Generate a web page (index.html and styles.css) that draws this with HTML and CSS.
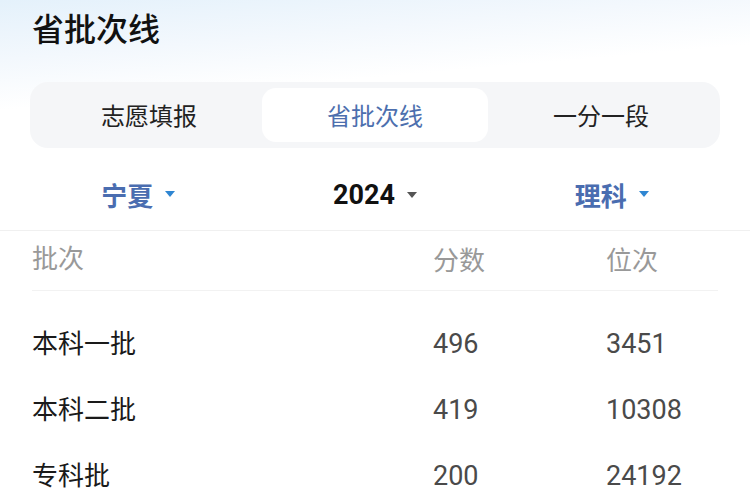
FILE: index.html
```html
<!DOCTYPE html>
<html lang="zh-CN">
<head>
    <meta charset="UTF-8">
    <title>省批次线</title>
    <link rel="stylesheet" href="styles.css">
</head>
<body>
<div class="page">
    <h1 class="title">省批次线</h1>
    <div class="tabs">
        <div class="tab">志愿填报</div>
        <div class="tab active">省批次线</div>
        <div class="tab">一分一段</div>
    </div>
    <div class="filters">
        <div class="filter blue">宁夏<span class="caret"></span></div>
        <div class="filter year">2024<span class="caret dark"></span></div>
        <div class="filter blue">理科<span class="caret"></span></div>
    </div>
    <div class="table">
        <div class="row head">
            <div class="c-name">批次</div>
            <div class="c-score">分数</div>
            <div class="c-rank">位次</div>
        </div>
        <div class="row">
            <div class="c-name">本科一批</div>
            <div class="c-score num">496</div>
            <div class="c-rank num">3451</div>
        </div>
        <div class="row">
            <div class="c-name">本科二批</div>
            <div class="c-score num">419</div>
            <div class="c-rank num">10308</div>
        </div>
        <div class="row">
            <div class="c-name">专科批</div>
            <div class="c-score num">200</div>
            <div class="c-rank num">24192</div>
        </div>
    </div>
</div>
</body>
</html>
```

FILE: styles.css
```css
* { box-sizing: border-box; }
html, body { margin: 0; padding: 0; }
body {
    font-family: "Noto Sans CJK SC", "Noto Sans", sans-serif;
    background: #fff;
    color: #1a1a1a;
    width: 750px;
    height: 500px;
    overflow: hidden;
}
.page {
    background: linear-gradient(175deg, #e4f1fb 0%, #f3f8fd 60px, #ffffff 110px);
    min-height: 500px;
}
.title {
    margin: 0;
    padding: 7px 0 0 32px;
    height: 82px;
    font-size: 32px;
    font-weight: 500;
    line-height: 40px;
    color: #111;
}
.tabs {
    margin: 0 30px;
    height: 66px;
    padding: 6px;
    background: #f5f6f8;
    border-radius: 18px;
    display: grid;
    grid-template-columns: 1fr 1fr 1fr;
}
.tab {
    display: flex;
    align-items: center;
    justify-content: center;
    font-size: 24px;
    color: #222;
    border-radius: 14px;
    padding-bottom: 2px;
}
.tab.active {
    background: #fff;
    color: #4d6fae;
}
.filters {
    margin: 0 20px;
    height: 82px;
    display: grid;
    grid-template-columns: 1fr 1fr 1fr;
    align-items: center;
}
.filter {
    display: flex;
    align-items: center;
    justify-content: center;
    font-size: 26px;
    font-weight: 700;
    padding-top: 10px;
}
.filter.blue { color: #4a6db0; }
.filter.year {
    font-family: Roboto, "Noto Sans", sans-serif;
    font-size: 27px;
    color: #111;
    padding-top: 12px;
}
.caret {
    width: 0;
    height: 0;
    margin-left: 12px;
    border-left: 5px solid transparent;
    border-right: 5px solid transparent;
    border-top: 6px solid #2f86d2;
}
.caret.dark { border-top-color: #555; }
.table {
    border-top: 1px solid #f0f0f0;
}
.row {
    display: flex;
    align-items: center;
    height: 66px;
    padding: 0 32px;
    font-size: 26px;
    color: #1a1a1a;
}
.row .c-name { padding-bottom: 5px; }
.row.head {
    height: 60px;
    color: #999;
    margin-bottom: 20px;
    border-bottom: 1px solid #f2f2f2;
    margin-left: 32px;
    margin-right: 32px;
    padding: 0 0 4px 0;
}
.c-name { width: 401px; }
.c-score { width: 173px; }
.c-rank { flex: 1; }
.num {
    font-family: Roboto, "Noto Sans", sans-serif;
    font-size: 27px;
    color: #4a4a4a;
}
```
